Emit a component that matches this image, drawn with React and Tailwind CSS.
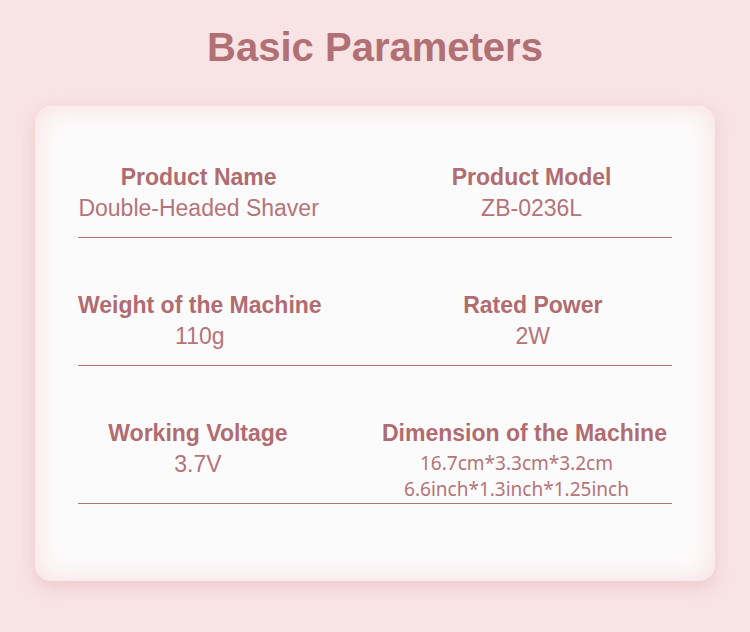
import React from 'react';

const rows = [
    {
        left: { title: 'Product Name', value: 'Double-Headed Shaver' },
        right: { title: 'Product Model', value: 'ZB-0236L' },
    },
    {
        left: { title: 'Weight of the Machine', value: '110g' },
        right: { title: 'Rated Power', value: '2W' },
    },
];

const Heading = ({ children }) => (
    <div className="text-[23px] leading-[31px] font-bold text-[#b06c70] whitespace-nowrap">{children}</div>
);

const Value = ({ children }) => (
    <div className="text-[23px] leading-[31px] text-[#b3747a] whitespace-nowrap">{children}</div>
);

const Divider = () => <div className="h-px bg-[#b5737a]" />;

const App = () => {
    return (
        <div className="w-[750px] h-[632px] bg-[#f8e3e5] pt-[24px] font-['Liberation_Sans',Arial,sans-serif] overflow-hidden">
            <h1 className="text-center text-[40px] leading-[46px] font-bold text-[#b07074]">Basic Parameters</h1>

            <div className="mx-[35px] mt-[36px] h-[475px] rounded-[16px] bg-[#fcfbfb] px-[43px] pt-[56px] shadow-[0_6px_16px_rgba(225,165,172,0.4),inset_0_0_26px_rgba(249,214,218,0.85)]">
                {rows.map((row, i) => (
                    <div key={i} className={i > 0 ? 'mt-[52px]' : ''}>
                        <div className="flex pb-[13px]">
                            <div className="w-[244px] flex flex-col items-center">
                                <Heading>{row.left.title}</Heading>
                                <Value>{row.left.value}</Value>
                            </div>
                            <div className="w-[284px] ml-[72px] flex flex-col items-center">
                                <Heading>{row.right.title}</Heading>
                                <Value>{row.right.value}</Value>
                            </div>
                        </div>
                        <Divider />
                    </div>
                ))}

                {/* last row has a two-line value set in another face */}
                <div className="mt-[52px]">
                    <div className="flex">
                        <div className="w-[244px] flex flex-col items-center">
                            <Heading>Working Voltage</Heading>
                            <Value>3.7V</Value>
                        </div>
                        <div className="w-[300px] ml-[59px] flex flex-col items-center">
                            <Heading>Dimension of the Machine</Heading>
                            <div className="mr-[16px] mt-[1px] font-['Noto_Sans',sans-serif] text-[19px] leading-[27px] text-[#b3747a] text-center whitespace-nowrap">
                                <div>16.7cm*3.3cm*3.2cm</div>
                                <div className="-mt-[1px]">6.6inch*1.3inch*1.25inch</div>
                            </div>
                        </div>
                    </div>
                    <Divider />
                </div>
            </div>
        </div>
    );
};

export default App;
